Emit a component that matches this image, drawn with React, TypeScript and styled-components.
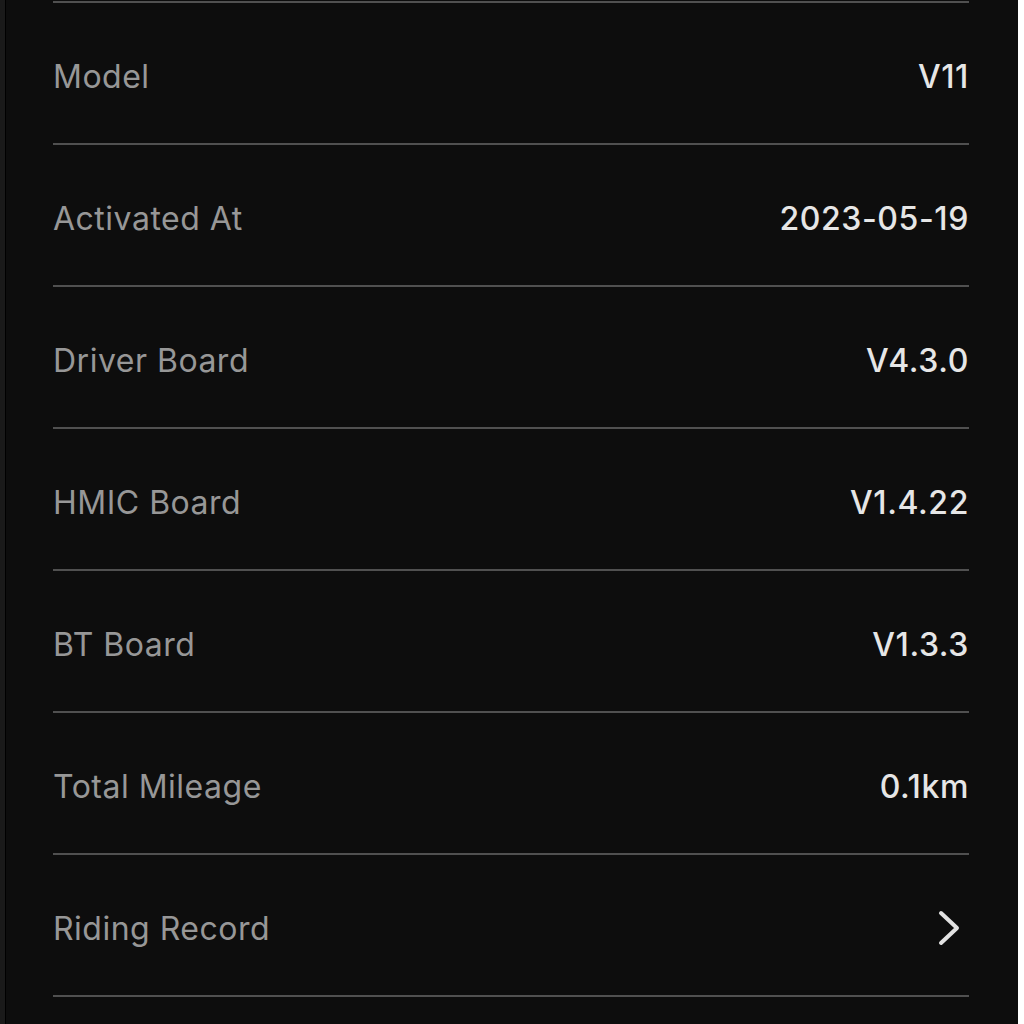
import { createGlobalStyle, styled } from "styled-components";

const GlobalStyle = createGlobalStyle`
  html, body {
    margin: 0;
    padding: 0;
    background: #ffffff;
  }
  body {
    font-family: Inter, "Noto Sans", "Liberation Sans", sans-serif;
  }
`;

const Screen = styled.div`
  width: 1013px;
  height: 1024px;
  background: #0d0d0d;
  border-left: 5px solid #1a1a1a;
  box-shadow: inset 1px 0 0 #000000;
  overflow: hidden;
`;

const List = styled.div`
  margin: 1px 0 0 48px;
  width: 916px;
  display: flex;
  flex-direction: column;
  border-bottom: 2px solid #505050;
`;

const Row = styled.div`
  border-top: 2px solid #505050;
  display: flex;
  align-items: center;
  justify-content: space-between;
  padding-top: 6px;
  height: 134px;
`;

const Label = styled.span`
  font-size: 32px;
  color: #979797;
  letter-spacing: 0.5px;
`;

const Value = styled.span`
  font-size: 32px;
  font-weight: 500;
  color: #e6e6e6;
  letter-spacing: 0.6px;
`;

const Chevron = styled.svg`
  width: 26px;
  height: 40px;
  margin-right: 7px;
`;

const rows = [
  { label: "Model", value: "V11" },
  { label: "Activated At", value: "2023-05-19" },
  { label: "Driver Board", value: "V4.3.0" },
  { label: "HMIC Board", value: "V1.4.22" },
  { label: "BT Board", value: "V1.3.3" },
  { label: "Total Mileage", value: "0.1km" },
];

export default function App() {
  return (
    <>
      <GlobalStyle />
      <Screen>
        <List>
          {rows.map((r) => (
            <Row key={r.label}>
              <Label>{r.label}</Label>
              <Value>{r.value}</Value>
            </Row>
          ))}
          <Row>
            <Label>Riding Record</Label>
            <Chevron viewBox="0 0 26 40">
              <path
                d="M5 5 L21 20 L5 35"
                fill="none"
                stroke="#e2e2e2"
                strokeWidth="4"
                strokeLinecap="round"
                strokeLinejoin="round"
              />
            </Chevron>
          </Row>
        </List>
      </Screen>
    </>
  );
}
